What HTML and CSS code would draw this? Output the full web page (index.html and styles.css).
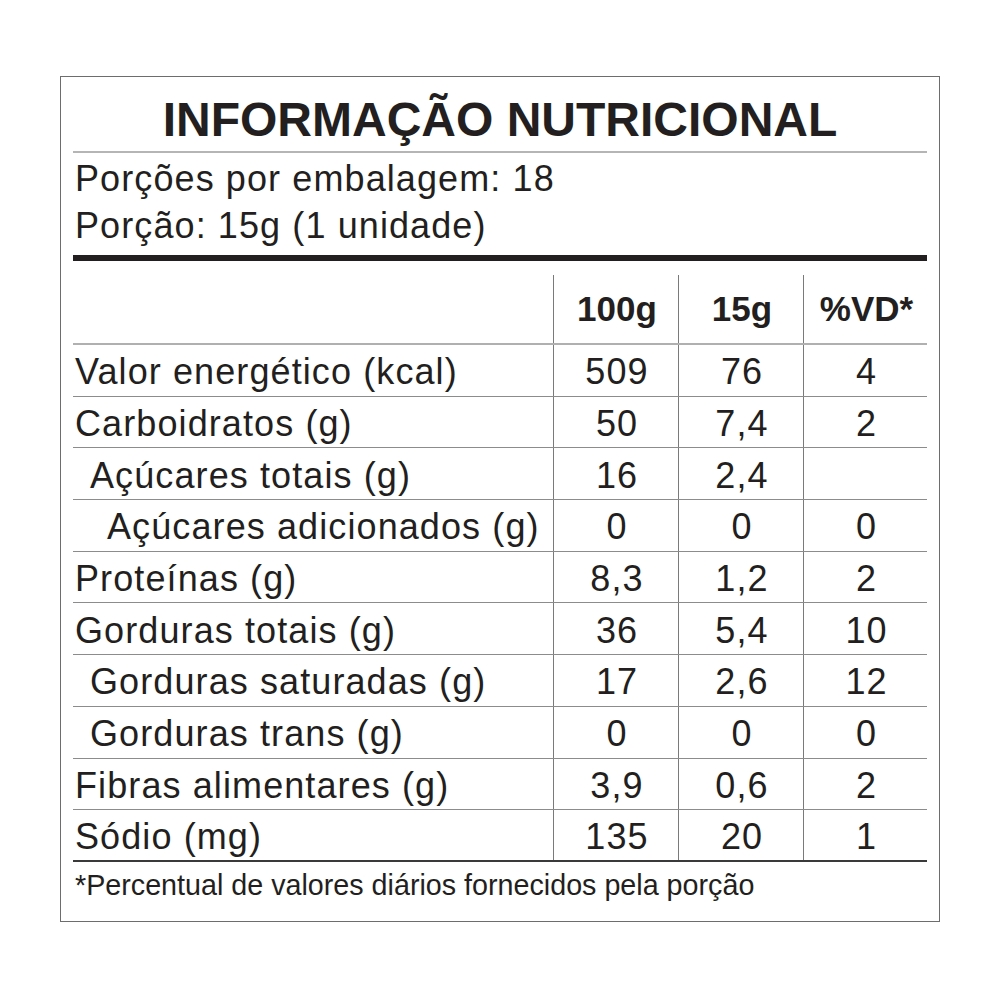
FILE: index.html
```html
<!DOCTYPE html>
<html lang="pt">
<head>
<meta charset="utf-8">
<title>Informação Nutricional</title>
<link rel="stylesheet" href="styles.css">
</head>
<body>
<div class="label">
  <h1 class="title">INFORMAÇÃO NUTRICIONAL</h1>
  <div class="serving">
    <div class="serving-line">Porções por embalagem: 18</div>
    <div class="serving-line">Porção: 15g (1 unidade)</div>
  </div>
  <div class="table">
    <div class="row head">
      <div class="cell name"></div>
      <div class="cell val">100g</div>
      <div class="cell val">15g</div>
      <div class="cell val">%VD*</div>
    </div>
    <div class="row">
      <div class="cell name">Valor energético (kcal)</div>
      <div class="cell val">509</div>
      <div class="cell val">76</div>
      <div class="cell val">4</div>
    </div>
    <div class="row">
      <div class="cell name">Carboidratos (g)</div>
      <div class="cell val">50</div>
      <div class="cell val">7,4</div>
      <div class="cell val">2</div>
    </div>
    <div class="row">
      <div class="cell name indent1">Açúcares totais (g)</div>
      <div class="cell val">16</div>
      <div class="cell val">2,4</div>
      <div class="cell val"></div>
    </div>
    <div class="row">
      <div class="cell name indent2">Açúcares adicionados (g)</div>
      <div class="cell val">0</div>
      <div class="cell val">0</div>
      <div class="cell val">0</div>
    </div>
    <div class="row">
      <div class="cell name">Proteínas (g)</div>
      <div class="cell val">8,3</div>
      <div class="cell val">1,2</div>
      <div class="cell val">2</div>
    </div>
    <div class="row">
      <div class="cell name">Gorduras totais (g)</div>
      <div class="cell val">36</div>
      <div class="cell val">5,4</div>
      <div class="cell val">10</div>
    </div>
    <div class="row">
      <div class="cell name indent1">Gorduras saturadas (g)</div>
      <div class="cell val">17</div>
      <div class="cell val">2,6</div>
      <div class="cell val">12</div>
    </div>
    <div class="row">
      <div class="cell name indent1">Gorduras trans (g)</div>
      <div class="cell val">0</div>
      <div class="cell val">0</div>
      <div class="cell val">0</div>
    </div>
    <div class="row">
      <div class="cell name">Fibras alimentares (g)</div>
      <div class="cell val">3,9</div>
      <div class="cell val">0,6</div>
      <div class="cell val">2</div>
    </div>
    <div class="row last">
      <div class="cell name">Sódio (mg)</div>
      <div class="cell val">135</div>
      <div class="cell val">20</div>
      <div class="cell val">1</div>
    </div>
  </div>
  <p class="note">*Percentual de valores diários fornecidos pela porção</p>
</div>
</body>
</html>
```

FILE: styles.css
```css
html, body {
  margin: 0;
  padding: 0;
  background: #ffffff;
}

body {
  font-family: "Liberation Sans", Arial, sans-serif;
  color: #231f20;
}

.label {
  box-sizing: border-box;
  width: 880px;
  height: 846px;
  margin: 76px 0 0 60px;
  padding: 0 12px;
  border: 1px solid #6d6d6d;
}

.title {
  margin: 0;
  padding: 19px 0 7px;
  font-size: 48px;
  line-height: 48px;
  font-weight: bold;
  text-align: center;
  border-bottom: 2px solid #b5b5b5;
}

.serving {
  padding: 2px 0 6px 2px;
  border-bottom: 6px solid #231f20;
}

.serving-line {
  font-size: 36px;
  line-height: 47px;
  letter-spacing: 1.1px;
}

.table {
  margin-top: 14px;
}

.row {
  display: grid;
  grid-template-columns: 480px 125px 125px 1fr;
  box-sizing: border-box;
  height: 51.7px;
  border-bottom: 1.5px solid #8c8c8c;
}

.row.head {
  height: 70px;
  border-bottom: 2px solid #b0b0b0;
}

.row.last {
  border-bottom: 2.5px solid #3a3a3a;
}

.cell {
  display: flex;
  align-items: center;
  padding-top: 4px;
  font-size: 36px;
  letter-spacing: 1.1px;
  white-space: nowrap;
}

.head .cell {
  padding-top: 0;
  font-size: 35px;
  font-weight: bold;
  letter-spacing: 0;
}

.name {
  padding-left: 2px;
}

.name.indent1 {
  padding-left: 17px;
}

.name.indent2 {
  padding-left: 34px;
}

.val {
  justify-content: center;
  border-left: 1px solid #7a7a7a;
  padding-left: 2px;
}

.note {
  margin: 9px 0 0 2px;
  font-size: 28.7px;
  line-height: 28px;
}
```
